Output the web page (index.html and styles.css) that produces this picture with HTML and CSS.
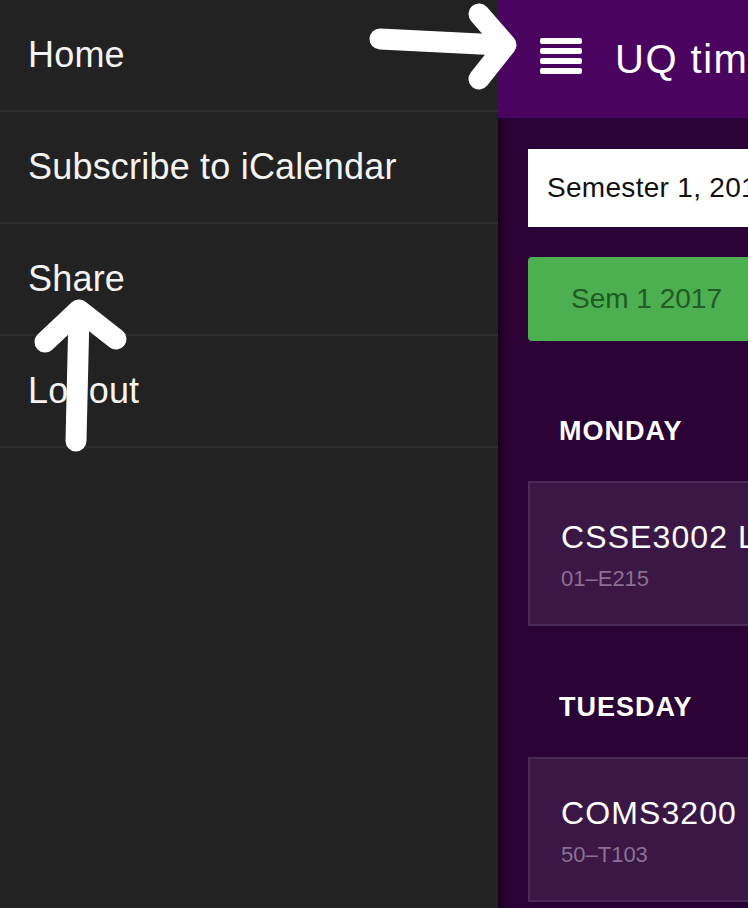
FILE: index.html
```html
<!DOCTYPE html>
<html>
<head>
<meta charset="utf-8">
<link rel="stylesheet" href="styles.css">
</head>
<body>
<div class="app">
  <nav class="sidebar">
    <div class="menu-item">Home</div>
    <div class="menu-item">Subscribe to iCalendar</div>
    <div class="menu-item">Share</div>
    <div class="menu-item">Logout</div>
  </nav>
  <main class="main">
    <header class="topbar">
      <div class="burger"><span></span><span></span><span></span><span></span></div>
      <div class="title">UQ timetable</div>
    </header>
    <section class="content">
      <div class="select">Semester 1, 2017</div>
      <div class="tab">Sem 1 2017</div>
      <div class="day">MONDAY</div>
      <div class="card">
        <div class="card-title">CSSE3002 Lecture</div>
        <div class="card-sub">01–E215</div>
      </div>
      <div class="day second">TUESDAY</div>
      <div class="card">
        <div class="card-title">COMS3200 Lecture</div>
        <div class="card-sub">50–T103</div>
      </div>
    </section>
  </main>
</div>
<svg class="annot" width="748" height="908" viewBox="0 0 748 908">
  <g fill="none" stroke="#ffffff" stroke-width="21" stroke-linecap="round" stroke-linejoin="round">
    <path d="M380 39 L500 45"/>
    <path d="M479 14 L506 45 L479 79"/>
    <path d="M76 441 L79 314"/>
    <path d="M45 342 L79 310 L116 339"/>
  </g>
</svg>
</body>
</html>
```
FILE: styles.css
```css
html, body {
  margin: 0;
  padding: 0;
  width: 748px;
  height: 908px;
  overflow: hidden;
  font-family: "Liberation Sans", Arial, sans-serif;
}
.app {
  display: flex;
  width: 748px;
  height: 908px;
}
.sidebar {
  width: 498px;
  flex: 0 0 498px;
  background: #222222;
}
.menu-item {
  height: 112px;
  border-bottom: 2px solid #2c2c2c;
  display: flex;
  align-items: center;
  padding-left: 28px;
  box-sizing: border-box;
  color: #f4f4f4;
  font-size: 36px;
  letter-spacing: 0.2px;
}
.main {
  flex: 1;
  min-width: 0;
  overflow: hidden;
  background: #2a0236;
  box-shadow: inset 8px 0 6px -4px rgba(0, 0, 0, 0.45);
  display: flex;
  flex-direction: column;
}
.topbar {
  height: 118px;
  flex: 0 0 118px;
  background: #4a045f;
  display: flex;
  align-items: center;
  padding-left: 42px;
  gap: 33px;
  white-space: nowrap;
}
.burger {
  display: flex;
  flex-direction: column;
  gap: 4px;
  margin-bottom: 7px;
}
.burger span {
  display: block;
  width: 42px;
  height: 6px;
  border-radius: 2px;
  background: #ffffff;
}
.title {
  color: #ffffff;
  font-size: 40px;
  letter-spacing: 1.5px;
}
.content {
  padding-left: 30px;
  white-space: nowrap;
}
.select {
  margin-top: 31px;
  height: 78px;
  background: #ffffff;
  display: flex;
  align-items: center;
  padding-left: 19px;
  color: #111111;
  font-size: 28px;
  letter-spacing: 0.3px;
  width: 400px;
}
.tab {
  margin-top: 30px;
  height: 84px;
  width: 400px;
  background: #4caf50;
  border-radius: 4px;
  display: flex;
  align-items: center;
  padding-left: 43px;
  color: #1f5c23;
  font-size: 28px;
}
.day {
  margin-top: 74px;
  margin-bottom: 34px;
  height: 32px;
  line-height: 32px;
  padding-left: 31px;
  color: #ffffff;
  font-weight: bold;
  font-size: 27px;
  letter-spacing: 1px;
}
.day.second {
  margin-top: 65px;
}
.card {
  height: 145px;
  box-sizing: border-box;
  width: 400px;
  background: #3b1746;
  border: 2px solid #4b2a58;
  border-right: none;
  padding: 35px 0 0 31px;
}
.card-title {
  color: #ffffff;
  font-size: 32px;
  line-height: 38px;
  letter-spacing: 1.1px;
}
.card-sub {
  margin-top: 9px;
  color: #8a7092;
  font-size: 22px;
  line-height: 28px;
  font-weight: 300;
}
.annot {
  position: absolute;
  left: 0;
  top: 0;
  pointer-events: none;
}
```
